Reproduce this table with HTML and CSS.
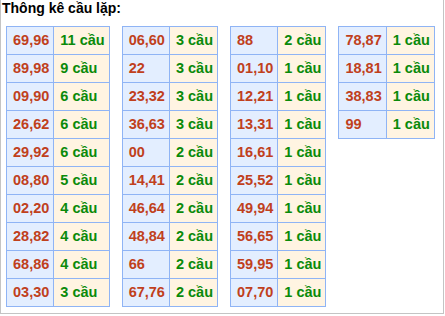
FILE: index.html
```html
<!DOCTYPE html>
<html lang="vi">
<head>
<meta charset="utf-8">
<link rel="stylesheet" href="styles.css">
</head>
<body>
<div class="box">
  <div class="title">Thông kê cầu lặp:</div>
  <div class="tables">
    <table class="tk">
      <tr><td class="num">69,96</td><td class="cnt">11 cầu</td></tr>
      <tr><td class="num">89,98</td><td class="cnt">9 cầu</td></tr>
      <tr><td class="num">09,90</td><td class="cnt">6 cầu</td></tr>
      <tr><td class="num">26,62</td><td class="cnt">6 cầu</td></tr>
      <tr><td class="num">29,92</td><td class="cnt">6 cầu</td></tr>
      <tr><td class="num">08,80</td><td class="cnt">5 cầu</td></tr>
      <tr><td class="num">02,20</td><td class="cnt">4 cầu</td></tr>
      <tr><td class="num">28,82</td><td class="cnt">4 cầu</td></tr>
      <tr><td class="num">68,86</td><td class="cnt">4 cầu</td></tr>
      <tr><td class="num">03,30</td><td class="cnt">3 cầu</td></tr>
    </table>
    <table class="tk">
      <tr><td class="num">06,60</td><td class="cnt">3 cầu</td></tr>
      <tr><td class="num">22</td><td class="cnt">3 cầu</td></tr>
      <tr><td class="num">23,32</td><td class="cnt">3 cầu</td></tr>
      <tr><td class="num">36,63</td><td class="cnt">3 cầu</td></tr>
      <tr><td class="num">00</td><td class="cnt">2 cầu</td></tr>
      <tr><td class="num">14,41</td><td class="cnt">2 cầu</td></tr>
      <tr><td class="num">46,64</td><td class="cnt">2 cầu</td></tr>
      <tr><td class="num">48,84</td><td class="cnt">2 cầu</td></tr>
      <tr><td class="num">66</td><td class="cnt">2 cầu</td></tr>
      <tr><td class="num">67,76</td><td class="cnt">2 cầu</td></tr>
    </table>
    <table class="tk">
      <tr><td class="num">88</td><td class="cnt">2 cầu</td></tr>
      <tr><td class="num">01,10</td><td class="cnt">1 cầu</td></tr>
      <tr><td class="num">12,21</td><td class="cnt">1 cầu</td></tr>
      <tr><td class="num">13,31</td><td class="cnt">1 cầu</td></tr>
      <tr><td class="num">16,61</td><td class="cnt">1 cầu</td></tr>
      <tr><td class="num">25,52</td><td class="cnt">1 cầu</td></tr>
      <tr><td class="num">49,94</td><td class="cnt">1 cầu</td></tr>
      <tr><td class="num">56,65</td><td class="cnt">1 cầu</td></tr>
      <tr><td class="num">59,95</td><td class="cnt">1 cầu</td></tr>
      <tr><td class="num">07,70</td><td class="cnt">1 cầu</td></tr>
    </table>
    <table class="tk">
      <tr><td class="num">78,87</td><td class="cnt">1 cầu</td></tr>
      <tr><td class="num">18,81</td><td class="cnt">1 cầu</td></tr>
      <tr><td class="num">38,83</td><td class="cnt">1 cầu</td></tr>
      <tr><td class="num">99</td><td class="cnt">1 cầu</td></tr>
    </table>
  </div>
</div>
</body>
</html>
```
FILE: styles.css
```css
html, body {
  margin: 0;
  padding: 0;
  background: #fff;
}
.box {
  width: 442px;
  height: 313px;
  border: 1px solid #c4c4c4;
  border-top: none;
  font-family: "Liberation Sans", Arial, sans-serif;
  box-sizing: content-box;
}
.title {
  font-weight: bold;
  font-size: 14px;
  line-height: 16px;
  color: #000;
  padding: 0 0 0 1px;
}
.tables {
  display: flex;
  align-items: flex-start;
  gap: 12px;
  margin-top: 10px;
  padding-left: 5px;
}
.tk {
  border-collapse: collapse;
  font-size: 14.5px;
  font-weight: bold;
}
.tk td {
  border: 1px solid #8fb4f5;
  padding: 5px 4px 5px 6px;
  line-height: 17px;
  white-space: nowrap;
  text-align: left;
}
.num {
  background: #e3eeff;
  color: #c0401c;
}
.cnt {
  background: #fff4e2;
  color: #0a8a0a;
}
```
